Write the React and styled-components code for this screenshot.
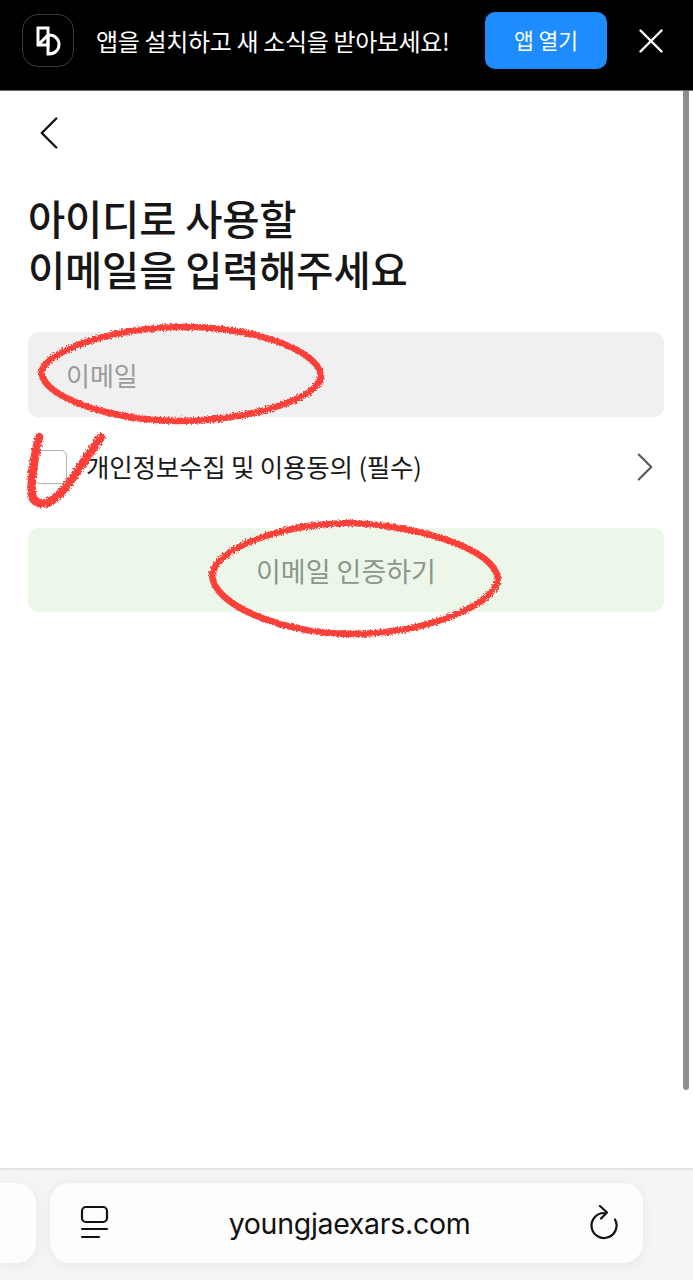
import React from "react";
import styled, { createGlobalStyle } from "styled-components";
import { ChevronLeft, ChevronRight, X } from "lucide-react";

const Global = createGlobalStyle`
  html, body { margin: 0; padding: 0; background: #fff; }
  * { box-sizing: border-box; }
  body { font-family: "Noto Sans CJK KR", "Noto Sans", sans-serif; }
`;

const Page = styled.div`
  position: relative;
  width: 693px;
  height: 1280px;
  overflow: hidden;
  display: flex;
  flex-direction: column;
`;

const Banner = styled.header`
  height: 91px;
  flex: none;
  background: #000;
  border-bottom: 1px solid #6a6a6a;
  display: flex;
  align-items: center;
  padding: 0 21px 9px 22px;
`;

const AppIcon = styled.div`
  width: 52px;
  height: 53px;
  flex: none;
  border: 1px solid #3c3c3c;
  border-radius: 16px;
  display: flex;
  align-items: center;
  justify-content: center;
`;

const BannerText = styled.span`
  margin-left: 22px;
  flex: 1;
  color: #fff;
  font-size: 24px;
  letter-spacing: -0.35px;
  white-space: nowrap;
`;

const OpenButton = styled.button`
  width: 122px;
  height: 57px;
  flex: none;
  margin-right: 23px;
  border: none;
  border-radius: 10px;
  background: #1e8cff;
  color: #fff;
  font: inherit;
  font-size: 21.5px;
  padding: 0 0 3px;
`;

const CloseIcon = styled(X)`
  flex: none;
`;

const Content = styled.main`
  flex: 1;
  padding: 13px 29px 0 28px;
  display: flex;
  flex-direction: column;
`;

const BackIcon = styled(ChevronLeft)`
  display: block;
  flex: none;
  margin-left: -8px;
  color: #111;
`;

const Title = styled.h1`
  margin: 30px 0 0;
  color: #161616;
  font-size: 40.5px;
  line-height: 51px;
  font-weight: 500;
  letter-spacing: -0.2px;
  white-space: nowrap;
`;

const EmailField = styled.div`
  margin-top: 38px;
  height: 85px;
  flex: none;
  background: #f0f0f1;
  border-radius: 10px;
  display: flex;
  align-items: center;
  padding-left: 38px;
  color: #9a9a9a;
  font-size: 26px;
`;

const AgreeRow = styled.div`
  margin-top: 33px;
  height: 34px;
  flex: none;
  display: flex;
  align-items: center;
  padding-left: 6px;
`;

const CheckBox = styled.span`
  width: 33px;
  height: 34px;
  flex: none;
  border: 1px solid #b4b4b4;
  border-radius: 6px;
  background: #fff;
`;

const AgreeText = styled.span`
  margin: 0 0 3px 19px;
  flex: 1;
  color: #1a1a1a;
  font-size: 25.5px;
  letter-spacing: -0.2px;
  white-space: nowrap;
`;

const MoreIcon = styled(ChevronRight)`
  flex: none;
  margin: -8px -6px -8px 0;
  color: #555;
`;

const SubmitButton = styled.button`
  margin-top: 44px;
  height: 84px;
  flex: none;
  border: none;
  border-radius: 10px;
  background: #edf7e9;
  color: #8c968b;
  font: inherit;
  font-size: 27px;
  padding: 0;
`;

const BrowserBar = styled.footer`
  height: 112px;
  flex: none;
  background: #f5f5f5;
  border-top: 2px solid #e3e3e3;
  padding-top: 13px;
  display: flex;
  gap: 14px;
`;

const PrevTab = styled.div`
  width: 36px;
  height: 80px;
  flex: none;
  background: #fdfdfd;
  border-radius: 0 20px 20px 0;
  box-shadow: 0 2px 14px rgba(0, 0, 0, 0.06);
`;

const AddressBar = styled.div`
  width: 593px;
  height: 80px;
  flex: none;
  background: #fdfdfd;
  border-radius: 20px;
  box-shadow: 0 2px 14px rgba(0, 0, 0, 0.06);
  display: flex;
  align-items: center;
  justify-content: space-between;
  padding: 0 24px 0 30px;
`;

const Url = styled.span`
  font-family: "Inter", "Liberation Sans", sans-serif;
  font-size: 28.5px;
  color: #111;
  letter-spacing: -0.3px;
`;

const Scrollbar = styled.div`
  position: absolute;
  right: 4px;
  top: 91px;
  width: 6px;
  height: 999px;
  background: #8e8e8e;
  border-radius: 0 0 3px 3px;
`;

const Scribbles = styled.svg`
  position: absolute;
  inset: 0;
  pointer-events: none;
`;

const LogoMark = () => (
  <svg width="26" height="30" viewBox="0 0 26 30" fill="none" stroke="#fff" strokeWidth="3">
    <path d="M3 2h10v17H3z" />
    <path d="M3 19 13 9h1c6 0 10 4.500 10 9.500S20 28 14 28h-1V9" />
  </svg>
);

const TabsIcon = () => (
  <svg width="30" height="36" viewBox="0 0 30 36" fill="none" stroke="#111" strokeWidth="2.2" strokeLinecap="round">
    <rect x="2" y="2" width="25" height="15" rx="4" />
    <path d="M2 24h25M2 32h17" />
  </svg>
);

const ReloadIcon = () => (
  <svg width="30" height="36" viewBox="0 0 30 36" fill="none" stroke="#111" strokeWidth="2.2" strokeLinecap="round" strokeLinejoin="round">
    <path d="M15 8a12.500 12.500 0 1 0 11 6.500" />
    <path d="M11 1l7 6.500-6 6" />
  </svg>
);

const App = () => {
  return (
    <Page>
      <Global />
      <Banner>
        <AppIcon>
          <LogoMark />
        </AppIcon>
        <BannerText>앱을 설치하고 새 소식을 받아보세요!</BannerText>
        <OpenButton>앱 열기</OpenButton>
        <CloseIcon size={42} color="#fff" strokeWidth={1.4} />
      </Banner>
      <Content>
        <BackIcon size={58} strokeWidth={1} />
        <Title>
          아이디로 사용할
          <br />
          이메일을 입력해주세요
        </Title>
        <EmailField>이메일</EmailField>
        <AgreeRow>
          <CheckBox />
          <AgreeText>개인정보수집 및 이용동의 (필수)</AgreeText>
          <MoreIcon size={50} strokeWidth={1} />
        </AgreeRow>
        <SubmitButton>이메일 인증하기</SubmitButton>
      </Content>
      <BrowserBar>
        <PrevTab />
        <AddressBar>
          <TabsIcon />
          <Url>youngjaexars.com</Url>
          <ReloadIcon />
        </AddressBar>
      </BrowserBar>
      <Scrollbar />
      <Scribbles width="693" height="1280" viewBox="0 0 693 1280" fill="none">
        <defs>
          <filter id="crayon" x="-10%" y="-10%" width="120%" height="120%">
            <feTurbulence type="fractalNoise" baseFrequency="0.6" numOctaves="2" seed="4" />
            <feDisplacementMap in="SourceGraphic" scale="5" />
          </filter>
        </defs>
        <g stroke="#fa3f38" strokeWidth="6.5" strokeLinecap="round" strokeLinejoin="round" filter="url(#crayon)">
          <path d="M41 372C48 350 112 328 180 327 C252 326 318 350 321 375 C322 398 250 421 178 421 C110 420 44 398 41 372Z" />
          <path d="M212 575C216 548 280 524 350 523 C420 526 492 548 498 578 C496 606 424 634 350 634 C280 632 214 606 212 575Z" />
          <path strokeWidth="8.5" d="M39 437C35 455 30 478 32 494C33 505 46 506 54 499C62 492 72 480 80 467L101 437" />
        </g>
      </Scribbles>
    </Page>
  );
};

export default App;
